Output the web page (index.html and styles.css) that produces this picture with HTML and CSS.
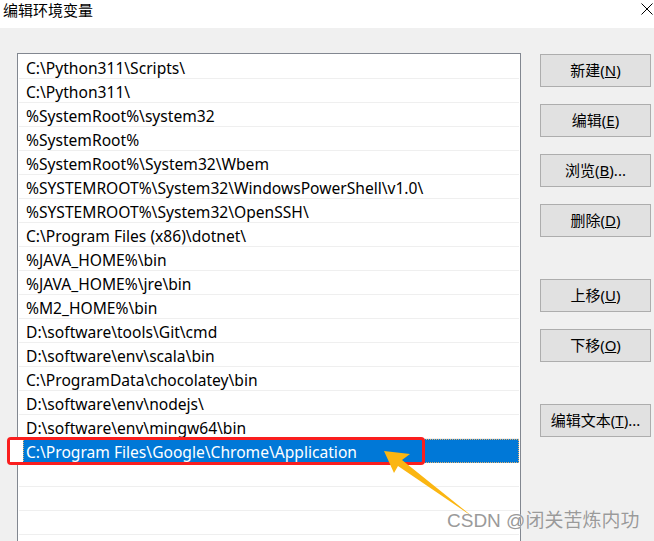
FILE: index.html
```html
<!DOCTYPE html>
<html lang="zh">
<head>
<meta charset="utf-8">
<title>编辑环境变量</title>
<link rel="stylesheet" href="styles.css">
</head>
<body>
<div class="window">
  <div class="titlebar">
    <span class="title">编辑环境变量</span>
    <svg class="close" width="12" height="12" viewBox="0 0 12 12"><path d="M0.5 0.5 L11.5 11.5 M11.5 0.5 L0.5 11.5" stroke="#000" stroke-width="1" fill="none"/></svg>
  </div>
  <div class="content">
    <div class="listbox">
      <div class="row">C:\Python311\Scripts\</div>
      <div class="row">C:\Python311\</div>
      <div class="row">%SystemRoot%\system32</div>
      <div class="row">%SystemRoot%</div>
      <div class="row">%SystemRoot%\System32\Wbem</div>
      <div class="row">%SYSTEMROOT%\System32\WindowsPowerShell\v1.0\</div>
      <div class="row">%SYSTEMROOT%\System32\OpenSSH\</div>
      <div class="row">C:\Program Files (x86)\dotnet\</div>
      <div class="row">%JAVA_HOME%\bin</div>
      <div class="row">%JAVA_HOME%\jre\bin</div>
      <div class="row">%M2_HOME%\bin</div>
      <div class="row">D:\software\tools\Git\cmd</div>
      <div class="row">D:\software\env\scala\bin</div>
      <div class="row">C:\ProgramData\chocolatey\bin</div>
      <div class="row">D:\software\env\nodejs\</div>
      <div class="row">D:\software\env\mingw64\bin</div>
      <div class="row selected">C:\Program Files\Google\Chrome\Application</div>
      <div class="row"></div>
      <div class="row"></div>
      <div class="row"></div>
    </div>
    <div class="buttons">
      <button class="btn">新建(<u>N</u>)</button>
      <button class="btn">编辑(<u>E</u>)</button>
      <button class="btn">浏览(<u>B</u>)...</button>
      <button class="btn">删除(<u>D</u>)</button>
      <button class="btn group">上移(<u>U</u>)</button>
      <button class="btn">下移(<u>O</u>)</button>
      <button class="btn group">编辑文本(<u>T</u>)...</button>
    </div>
  </div>
  <div class="highlight"></div>
  <svg class="arrow" width="654" height="541" viewBox="0 0 654 541">
    <polygon points="384,451 410,454 402,460 473,517 398,466 394,473" fill="#fbb612"/>
  </svg>
  <div class="watermark">CSDN @闭关苦炼内功</div>
</div>
</body>
</html>
```

FILE: styles.css
```css
html, body {
  margin: 0;
  padding: 0;
}
body {
  width: 654px;
  height: 541px;
  overflow: hidden;
  font-family: "Noto Sans", "Noto Sans CJK SC", sans-serif;
  font-size: 15px;
  color: #000;
}
.window {
  position: relative;
  width: 654px;
  height: 541px;
  background: #f0f0f0;
  overflow: hidden;
}
.titlebar {
  height: 28px;
  background: #fff;
  display: flex;
  justify-content: space-between;
  align-items: flex-start;
}
.title {
  font-family: "Noto Sans CJK SC", sans-serif;
  font-size: 15px;
  line-height: 20px;
  margin-left: 3px;
}
.close {
  margin-top: 3px;
  margin-right: 1px;
}
.content {
  display: flex;
  align-items: flex-start;
  padding: 25px 0 0 17px;
}
.listbox {
  width: 502px;
  height: 520px;
  border: 1px solid #828790;
  background: #fff;
  padding-top: 1px;
  box-sizing: content-box;
}
.row {
  height: 24px;
  box-sizing: border-box;
  border-bottom: 1px solid #efefef;
  margin: 0 1px 0 1px;
  padding: 2px 0 0 7px;
  font-size: 15.6px;
  line-height: 22px;
  white-space: nowrap;
  overflow: hidden;
}
.row.selected {
  background: #0078d7;
  color: #fff;
  margin-left: 5px;
  padding-left: 3px;
  border-bottom-color: #0078d7;
  outline: 1px dotted #e0b070;
  outline-offset: -1px;
}
.buttons {
  display: flex;
  flex-direction: column;
  gap: 17px;
  margin-left: 19px;
  margin-top: 1px;
}
.btn {
  width: 111px;
  height: 33px;
  background: #e1e1e1;
  border: 1px solid #adadad;
  font-family: "Noto Sans", "Noto Sans CJK SC", sans-serif;
  font-size: 15px;
  line-height: 20px;
  color: #000;
  padding: 0 0 2px 0;
  margin: 0;
}
.btn.group {
  margin-top: 25px;
}
.highlight {
  position: absolute;
  left: 7px;
  top: 437px;
  width: 418px;
  height: 28px;
  box-sizing: border-box;
  border: 3px solid #fa1e1e;
  border-radius: 4px;
}
.highlight::before {
  content: "";
  position: absolute;
  left: 0;
  top: 0;
  width: 13px;
  height: 100%;
  background: #fff;
}
.arrow {
  position: absolute;
  left: 0;
  top: 0;
}
.watermark {
  position: absolute;
  left: 447px;
  top: 509px;
  font-family: "Liberation Sans", "Noto Sans CJK SC", sans-serif;
  font-size: 19px;
  line-height: 24px;
  color: #9a9a9a;
  text-shadow: 0 0 1px #fff;
  white-space: nowrap;
}
```
